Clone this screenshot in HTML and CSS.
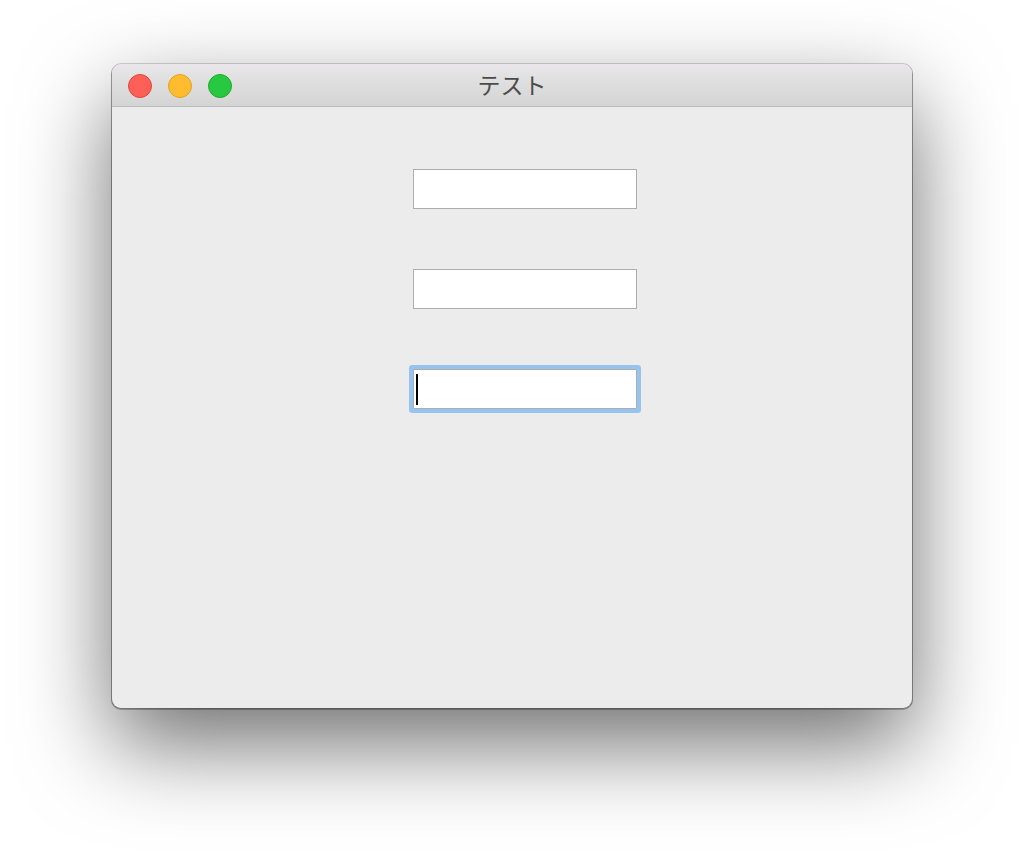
FILE: index.html
```html
<!DOCTYPE html>
<html lang="ja">
<head>
<meta charset="utf-8">
<title>テスト</title>
<link rel="stylesheet" href="styles.css">
</head>
<body>
<div class="page">
  <div class="window">
    <div class="titlebar">
      <div class="lights">
        <span class="light red"></span>
        <span class="light yellow"></span>
        <span class="light green"></span>
      </div>
      <div class="title">テスト</div>
    </div>
    <div class="content">
      <div class="field"></div>
      <div class="field"></div>
      <div class="field focused"><span class="caret"></span></div>
    </div>
  </div>
</div>
</body>
</html>
```

FILE: styles.css
```css
html, body {
  margin: 0;
  padding: 0;
  background: #ffffff;
}
body {
  width: 1024px;
  height: 868px;
  overflow: hidden;
  font-family: "Noto Sans CJK JP", "Noto Sans", sans-serif;
}
.page {
  padding: 64px 0 0 112px;
}
.window {
  width: 800px;
  height: 644px;
  border-radius: 9px;
  background: #ececec;
  overflow: hidden;
  display: flex;
  flex-direction: column;
  box-shadow: 0 0 0 1px rgba(0, 0, 0, 0.16), 0 1px 0 1px rgba(0, 0, 0, 0.25), 0 36px 90px rgba(0, 0, 0, 0.57);
}
.titlebar {
  position: relative;
  height: 42px;
  flex: none;
  border-bottom: 1px solid #b9b9b9;
  background: linear-gradient(#e9e7e9, #d4d4d4);
  display: flex;
  align-items: center;
  justify-content: center;
}
.lights {
  position: absolute;
  left: 16px;
  top: 10px;
  display: flex;
  gap: 16px;
}
.light {
  width: 22px;
  height: 22px;
  border-radius: 50%;
  border: 1px solid;
  display: block;
}
.red { background: #fe5f57; border-color: #e2463f; }
.yellow { background: #febc2e; border-color: #dfa123; }
.green { background: #28c840; border-color: #1dad2b; }
.title {
  font-size: 23px;
  color: #4b4b4b;
  line-height: 1;
  margin-top: -1px;
}
.content {
  flex: 1;
  display: flex;
  flex-direction: column;
  align-items: flex-start;
  gap: 60px;
  padding: 62px 0 0 301px;
}
.field {
  width: 222px;
  height: 38px;
  border: 1px solid #adadad;
  background: #ffffff;
  position: relative;
}
.field.focused {
  border-radius: 1px;
  box-shadow: 0 0 0 4px #97c3f1;
}
.caret {
  position: absolute;
  left: 2px;
  top: 4px;
  width: 2px;
  height: 31px;
  background: #000000;
}
```
